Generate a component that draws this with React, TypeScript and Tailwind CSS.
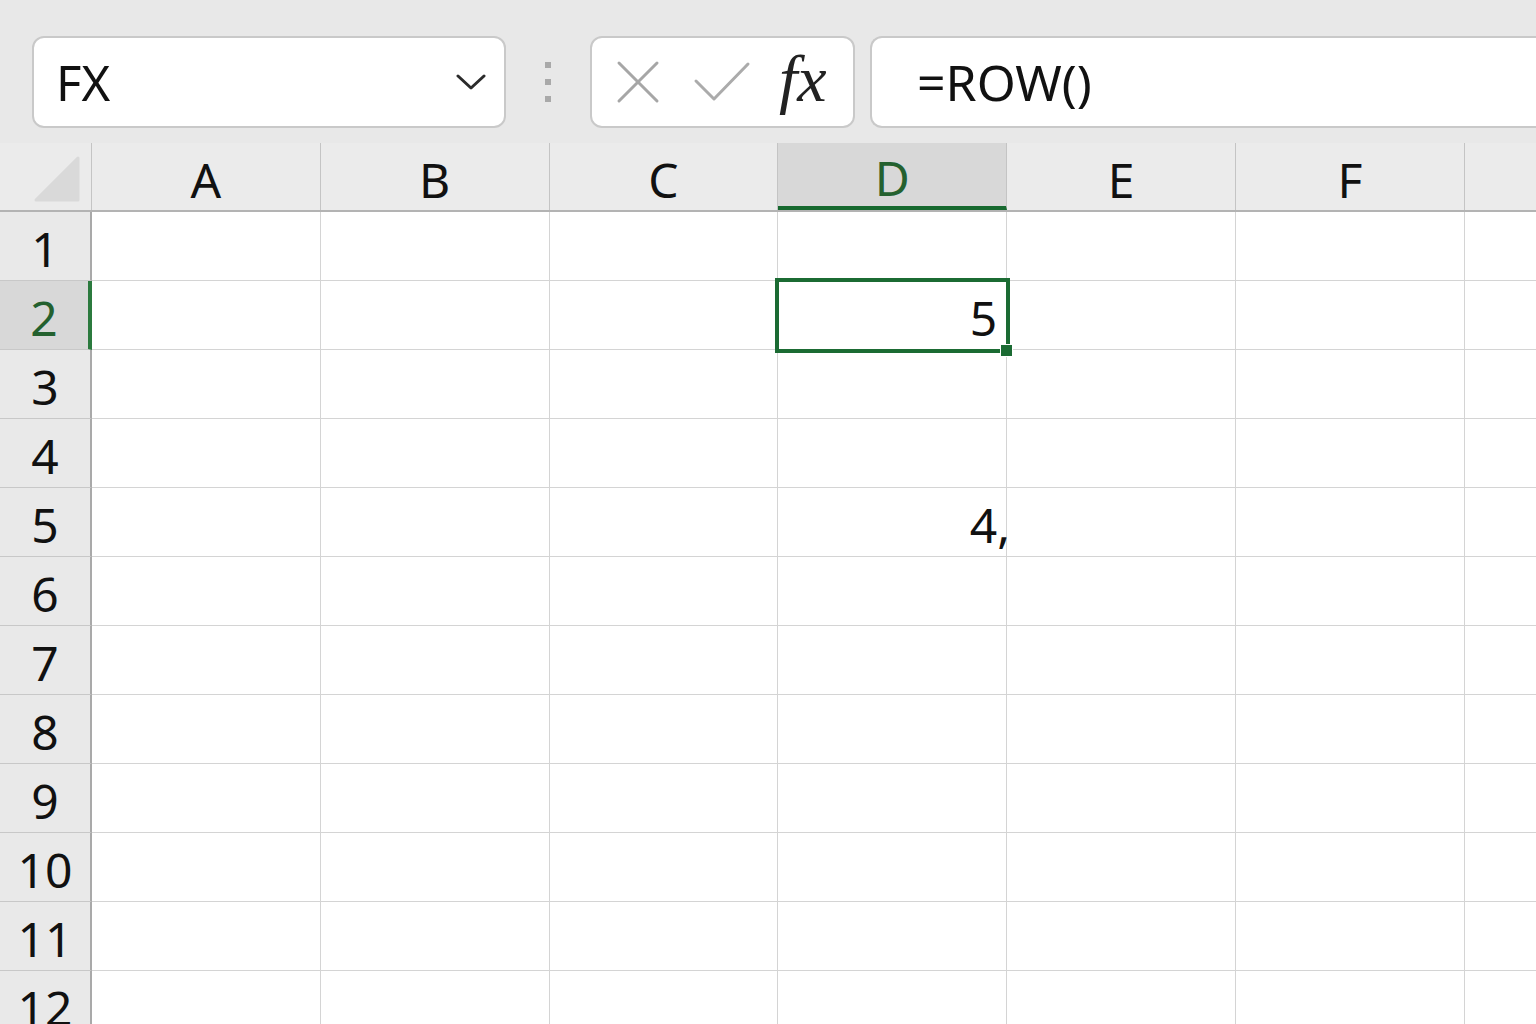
import React from 'react';

const COLS = ['A', 'B', 'C', 'D', 'E', 'F'];
const ROWS = Array.from({ length: 12 }, (_, i) => i + 1);

const font = { fontFamily: '"Noto Sans", "Open Sans", sans-serif' };

function Chevron() {
  return (
    <svg width="30" height="20" viewBox="0 0 30 20" className="shrink-0">
      <polyline points="2,4 15,16 28,4" fill="none" stroke="#2b2b2b" strokeWidth="3" strokeLinecap="round" strokeLinejoin="round" />
    </svg>
  );
}

function Grip() {
  return (
    <div className="flex flex-col gap-[11px] w-[84px] items-center">
      <div className="w-[6px] h-[6px] bg-[#a9a9a9]" />
      <div className="w-[6px] h-[6px] bg-[#a9a9a9]" />
      <div className="w-[6px] h-[6px] bg-[#a9a9a9]" />
    </div>
  );
}

function Toolbar() {
  return (
    <div className="h-[143px] flex items-start pt-[36px] pl-[32px] bg-[#e8e8e8]">
      {/* name box */}
      <div className="w-[474px] h-[92px] bg-white border-2 border-[#c9c9c9] rounded-[12px] flex items-center pl-[22px] pr-[18px]">
        <span className="text-[49px] text-[#111] flex-1 leading-none">FX</span>
        <Chevron />
      </div>
      <div className="h-[92px] flex items-center">
        <Grip />
      </div>
      {/* cancel / enter / fx */}
      <div className="w-[265px] h-[92px] bg-white border-2 border-[#c9c9c9] rounded-[12px] flex items-center pl-[24px]">
        <svg width="44" height="44" viewBox="0 0 44 44" className="shrink-0">
          <line x1="3" y1="3" x2="41" y2="41" stroke="#a6a6a6" strokeWidth="3" strokeLinecap="round" />
          <line x1="41" y1="3" x2="3" y2="41" stroke="#a6a6a6" strokeWidth="3" strokeLinecap="round" />
        </svg>
        <svg width="58" height="42" viewBox="0 0 58 42" className="shrink-0 ml-[33px]">
          <polyline points="3,20 21,38 55,3" fill="none" stroke="#ababab" strokeWidth="3" strokeLinecap="round" strokeLinejoin="round" />
        </svg>
        <span
          className="ml-[28px] text-[66px] italic text-[#222] leading-none -mt-[6px]"
          style={{ fontFamily: '"Liberation Serif", "DejaVu Serif", serif' }}
        >
          fx
        </span>
      </div>
      {/* formula bar */}
      <div className="flex-1 ml-[15px] h-[92px] bg-white border-2 border-r-0 border-[#c9c9c9] rounded-l-[12px] flex items-center pl-[45px]">
        <span className="text-[50px] text-[#111] leading-none">=ROW()</span>
      </div>
    </div>
  );
}

function HeaderRow() {
  return (
    <div className="flex h-[69px] border-b-2 border-[#b3b3b3] bg-[#ebebeb]">
      <div className="w-[92px] shrink-0 border-r border-[#c4c4c4] flex items-end justify-end pr-[11px] pb-[8px]">
        <svg width="46" height="46" viewBox="0 0 46 46">
          <polygon points="44,2 44,44 2,44" fill="#d9d9d9" stroke="#d9d9d9" strokeWidth="3" strokeLinejoin="round" />
        </svg>
      </div>
      {COLS.map((c) => {
        const sel = c === 'D';
        return (
          <div
            key={c}
            className={`w-[228.8px] shrink-0 border-r border-[#c4c4c4] flex items-center justify-center pt-[6px] text-[48px] ${
              sel ? 'bg-[#d8d8d8] text-[#24612f] border-b-4 border-b-[#17692f]' : 'text-[#111]'
            }`}
          >
            {c}
          </div>
        );
      })}
      <div className="flex-1" />
    </div>
  );
}

function Row({ n }: { n: number }) {
  const selRow = n === 2;
  return (
    <div className="flex h-[69px]">
      <div
        className={`w-[92px] shrink-0 border-b border-[#c8c8c8] border-r-2 flex items-center justify-center pt-[6px] text-[48px] ${
          selRow ? 'bg-[#d8d8d8] text-[#24612f] border-r-4 border-r-[#2b7a3e]' : 'bg-[#e9e9e9] border-r-[#a9a9a9] text-[#111]'
        }`}
      >
        {n}
      </div>
      {COLS.map((c) => {
        const active = c === 'D' && n === 2;
        return (
          <div
            key={c}
            className="relative w-[228.8px] shrink-0 bg-white border-b border-r border-[#d4d4d4] flex items-center justify-end pr-[9px] pt-[6px] text-[48px] text-[#111]"
          >
            {active && (
              <>
                5
                <div className="absolute -left-[3px] -top-[3px] -right-[4px] -bottom-[4px] border-[4px] border-[#1b6b33] z-10 pointer-events-none" />
                <div className="absolute -right-[7px] -bottom-[8px] w-[13px] h-[13px] bg-[#1b6b33] border border-white z-20" />
              </>
            )}
            {c === 'D' && n === 5 && (
              <span>
                4<span className="inline-block w-0">,</span>
              </span>
            )}
          </div>
        );
      })}
      <div className="flex-1 bg-white border-b border-[#d4d4d4]" />
    </div>
  );
}

export default function App() {
  return (
    <div className="w-[1536px] h-[1024px] overflow-hidden bg-[#e8e8e8]" style={font}>
      <Toolbar />
      <HeaderRow />
      {ROWS.map((n) => (
        <Row key={n} n={n} />
      ))}
    </div>
  );
}
